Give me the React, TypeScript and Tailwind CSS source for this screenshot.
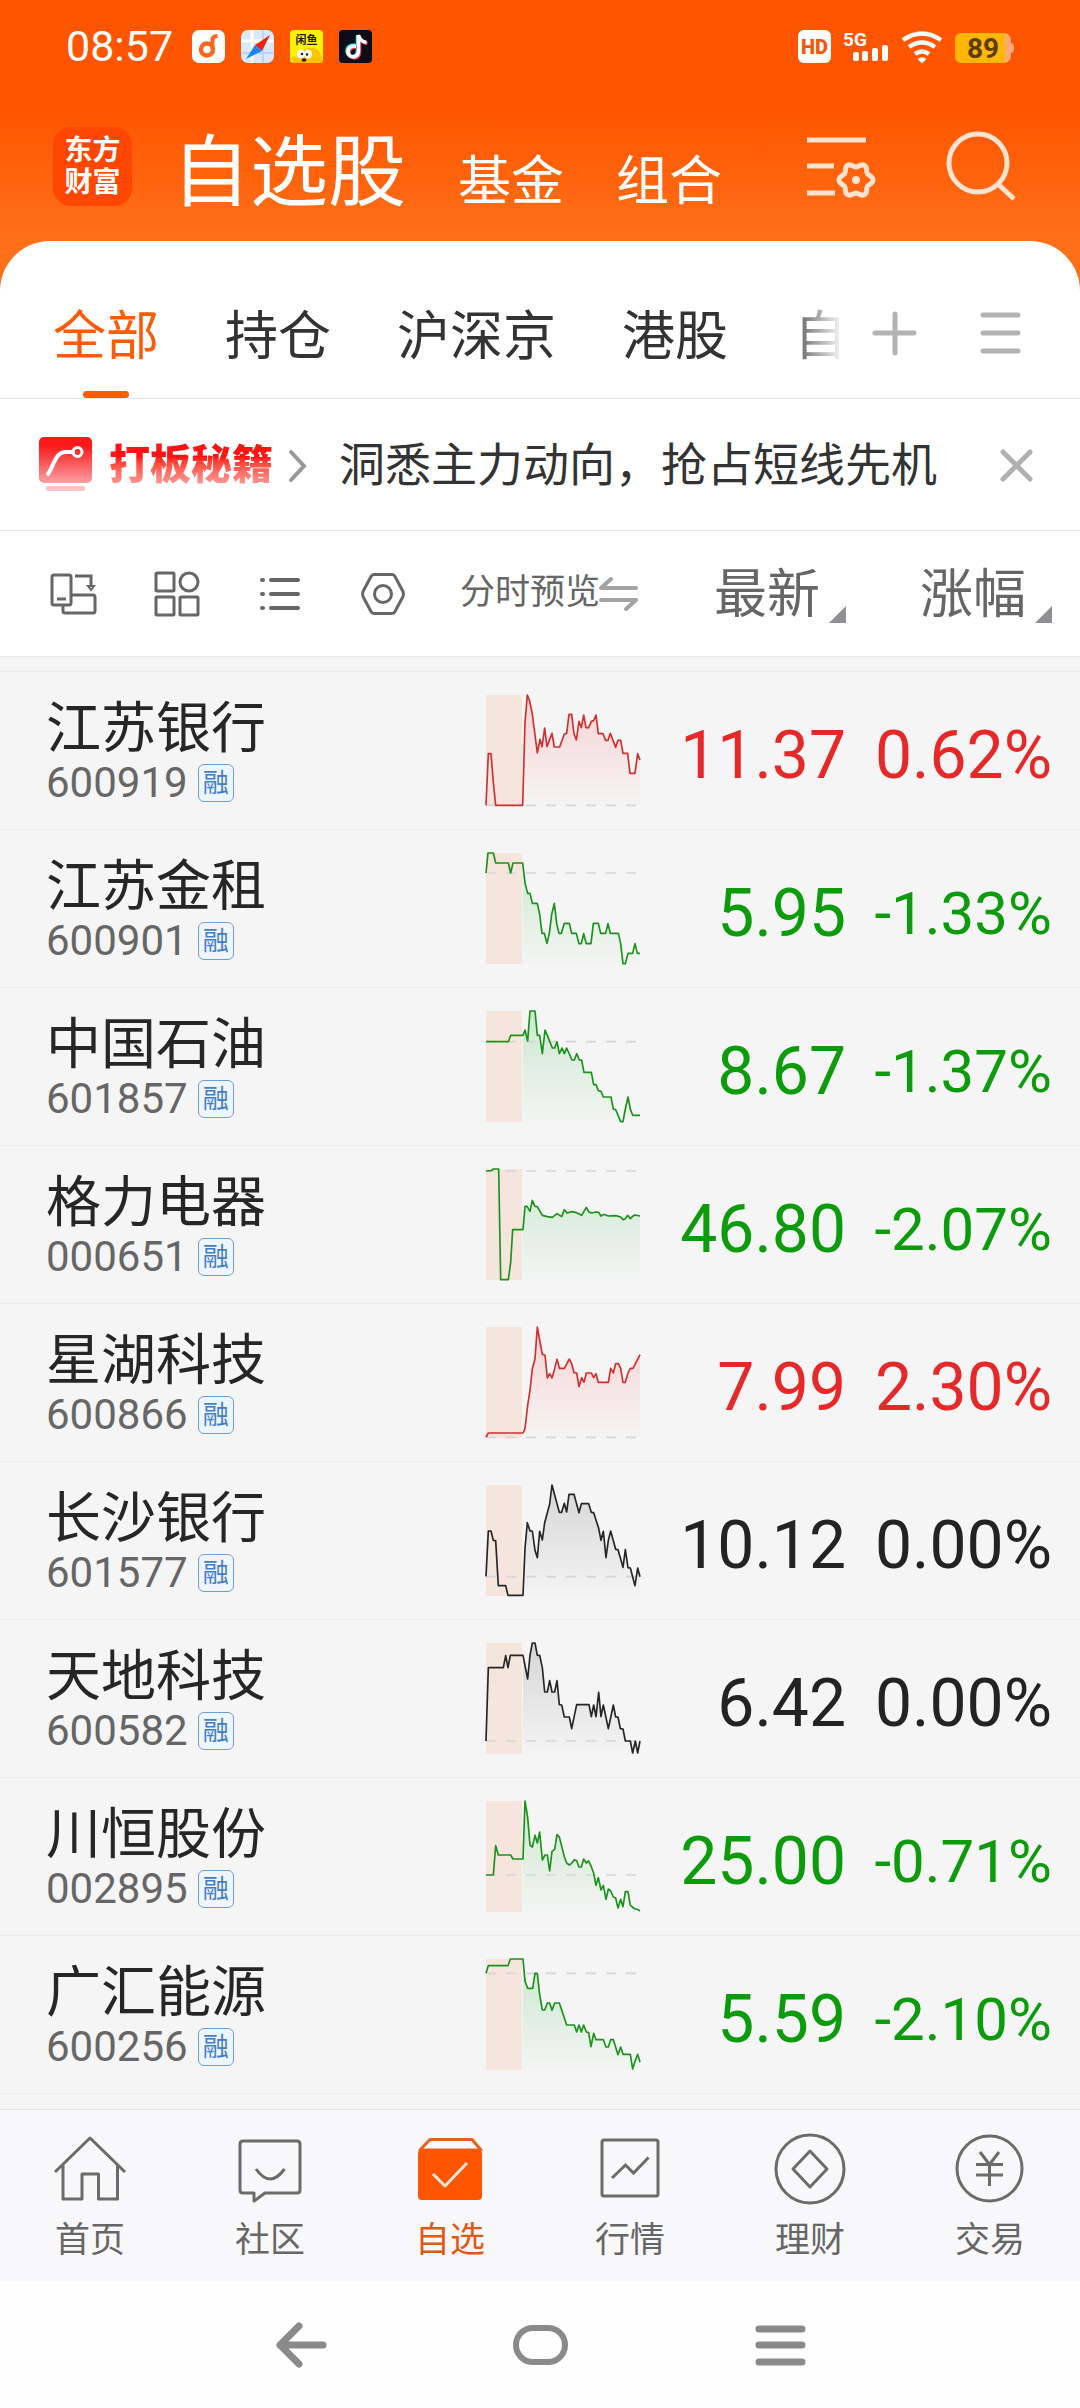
import React from "react";

type Tone = "up" | "down" | "flat";

type Stock = {
  name: string;
  code: string;
  price: string;
  change: string;
  tone: Tone;
  base: number;
  points: string;
};

const STROKE: Record<Tone, string> = { up: "#d2302f", down: "#1a931a", flat: "#262626" };
const FILL: Record<Tone, string> = { up: "#ff5a5a", down: "#3cb84a", flat: "#6b6b6b" };
const TEXT: Record<Tone, string> = {
  up: "text-[#e62828]",
  down: "text-[#0b9b0b]",
  flat: "text-[#232323]",
};

const STOCKS: Stock[] = [
  {
    name: "江苏银行", code: "600919", price: "11.37", change: "0.62%", tone: "up", base: 331,
    points:
      "0,331 7,176 15,176 22,263 29,331 110,331 117,83 124,0 131,18 139,58 154,174 162,133 168,155 176,99 183,155 198,115 205,156 221,156 235,117 242,115 249,58 257,58 264,117 271,135 279,79 286,98 293,60 300,98 308,98 316,79 323,77 330,60 337,116 351,116 359,136 366,136 373,115 389,157 396,136 404,136 411,175 425,175 432,235 447,235 455,176 462,195",
  },
  {
    name: "江苏金租", code: "600901", price: "5.95", change: "-1.33%", tone: "down", base: 60,
    points:
      "0,60 6,0 22,0 29,30 67,30 74,60 81,30 110,30 117,89 125,121 132,121 139,151 154,151 161,184 168,241 175,241 183,271 190,241 197,184 205,151 212,211 219,241 226,241 235,211 250,211 257,241 271,241 279,272 286,272 293,242 301,272 315,272 322,211 337,211 344,241 359,241 366,212 373,241 397,241 404,272 411,332 418,332 426,301 440,301 447,272 454,301 462,301",
  },
  {
    name: "中国石油", code: "601857", price: "8.67", change: "-1.37%", tone: "down", base: 92,
    points:
      "0,92 67,92 74,73 111,73 117,57 125,90 132,0 147,0 154,73 161,73 169,128 177,57 184,73 199,111 206,111 213,92 220,128 228,111 235,128 242,111 258,147 265,147 272,128 280,147 287,147 294,184 316,184 323,221 330,221 337,239 345,241 352,258 375,258 382,294 389,296 404,332 411,332 418,294 426,258 433,294 440,313 462,313",
  },
  {
    name: "格力电器", code: "000651", price: "46.80", change: "-2.07%", tone: "down", base: 6,
    points:
      "0,6 16,5 22,0 38,0 44,332 67,332 74,280 80,182 111,182 117,112 123,112 132,127 139,94 147,112 154,113 169,139 184,143 199,145 213,134 227,143 235,122 243,132 257,128 272,131 287,139 301,115 308,128 316,132 330,129 338,130 345,141 353,136 367,141 389,140 404,144 411,152 418,149 425,139 433,149 440,142 447,138 462,141",
  },
  {
    name: "星湖科技", code: "600866", price: "7.99", change: "2.30%", tone: "up", base: 331,
    points:
      "0,331 7,318 111,318 117,305 125,235 132,190 139,125 147,95 154,0 162,45 169,82 177,84 184,153 191,140 198,153 206,125 213,97 220,124 235,124 250,96 257,110 264,137 272,138 279,179 287,152 294,166 301,138 316,138 323,152 330,140 337,166 367,166 374,124 382,138 389,110 397,110 404,124 411,166 418,166 426,138 433,124 441,124 462,83",
  },
  {
    name: "长沙银行", code: "601577", price: "10.12", change: "0.00%", tone: "flat", base: 275,
    points:
      "0,274 7,138 15,138 22,166 29,167 37,302 59,302 66,331 111,331 117,190 124,113 132,138 139,138 147,196 154,218 161,139 169,165 176,113 191,57 198,0 206,30 220,82 227,82 235,55 242,81 249,28 264,28 279,83 286,56 308,56 316,82 323,83 338,130 345,166 352,139 360,218 367,166 374,138 389,193 396,194 411,247 418,194 426,248 433,249 447,302 455,249 462,275",
  },
  {
    name: "天地科技", code: "600582", price: "6.42", change: "0.00%", tone: "flat", base: 294,
    points:
      "0,294 7,74 52,74 59,38 66,74 73,37 111,37 125,108 132,37 139,0 147,0 154,37 161,37 169,74 176,147 184,147 191,113 198,147 206,147 213,113 220,185 227,186 235,222 250,222 257,257 272,185 309,185 316,221 323,186 330,221 338,148 345,221 352,186 367,257 382,186 389,222 396,222 403,257 411,258 418,294 433,294 440,330 448,294 455,330 462,294",
  },
  {
    name: "川恒股份", code: "002895", price: "25.00", change: "-0.71%", tone: "down", base: 222,
    points:
      "0,222 22,222 29,134 37,162 74,162 81,174 111,174 117,0 125,49 132,132 139,138 147,103 154,126 161,93 169,177 177,162 184,162 191,210 198,151 206,145 213,101 220,108 235,167 242,186 250,192 257,187 265,176 272,179 279,198 286,198 293,174 301,186 308,180 316,197 323,217 330,253 337,230 345,267 352,253 360,295 367,264 374,270 382,288 389,291 396,321 404,295 411,317 418,272 426,272 433,313 447,324 455,325 462,330",
  },
  {
    name: "广汇能源", code: "600256", price: "5.59", change: "-2.10%", tone: "down", base: 43,
    points:
      "0,43 7,20 66,20 73,0 111,0 117,66 125,88 140,88 147,43 154,43 161,108 169,153 176,153 184,132 191,132 198,154 206,132 220,132 242,198 265,198 272,219 279,198 286,219 293,198 301,219 308,221 315,263 323,223 330,242 352,242 360,264 367,264 374,242 382,242 396,287 404,264 411,286 433,286 440,330 447,307 455,286 462,310",
  },
];

function Sparkline({ stock }: { stock: Stock }) {
  const id = `area-${stock.code}`;
  const live = stock.points.split(" ").filter((p) => Number(p.split(",")[0]) >= 110);
  return (
    <svg viewBox="0 0 462 333" className="block h-[111px] w-[154px] overflow-visible" role="img" aria-label={`${stock.name}分时走势`}>
      <defs>
        <linearGradient id={id} x1="0" y1="0" x2="0" y2="333" gradientUnits="userSpaceOnUse">
          <stop offset="0" stopColor={FILL[stock.tone]} stopOpacity="0.22" />
          <stop offset="1" stopColor={FILL[stock.tone]} stopOpacity="0.01" />
        </linearGradient>
      </defs>
      <rect width="108" height="333" fill="#f5e5dd" />
      <polygon points={`111,333 ${live.join(" ")} 462,333`} fill={`url(#${id})`} />
      <line x1="0" x2="456" y1={stock.base} y2={stock.base} stroke="#d5d6dc" strokeWidth="5" strokeDasharray="30 30" />
      <polyline points={stock.points} fill="none" stroke={STROKE[stock.tone]} strokeWidth="5" strokeLinejoin="round" />
    </svg>
  );
}

const GEAR = Array.from({ length: 73 }, (_, i) => {
  const a = (i * Math.PI) / 36;
  const r = 15 + 2 * Math.cos(6 * a);
  return `${(856 + r * Math.cos(a)).toFixed(1)},${(180 + r * Math.sin(a)).toFixed(1)}`;
}).join(" ");

function StatusBar() {
  return (
    <div className="flex h-[92px] items-center justify-between pr-[65px] pl-[66px]">
      <div className="flex items-center gap-4">
        <span className="w-[110px] text-[43px] leading-none">08:57</span>
        <svg viewBox="0 0 33 33" className="size-[33px]" aria-hidden="true">
          <rect width="33" height="33" rx="7" fill="#fff" />
          <circle cx="15" cy="19.500" r="6" fill="none" stroke="#f9671c" strokeWidth="4.500" />
          <path d="M20.500 19V9.500q0-3 5-3.500" fill="none" stroke="#f9671c" strokeWidth="4" />
        </svg>
        <svg viewBox="0 0 33 33" className="size-[33px]" aria-hidden="true">
          <rect width="33" height="33" rx="7" fill="#dbe7fb" />
          <path d="M11 0v33M0 11h33" stroke="#fff" strokeWidth="3" />
          <path d="M22 0v33M0 23h33" stroke="#a9d3f5" strokeWidth="1.500" />
          <path d="M29 5 14 15l7 6z" fill="#e8230f" />
          <path d="m5 29 9-14 7 6z" fill="#1b86f3" />
        </svg>
        <svg viewBox="0 0 33 33" className="size-[33px]" aria-hidden="true">
          <rect width="33" height="33" rx="4" fill="#fff200" />
          <path d="M3 33q-3-6 1-7l3 2q1-10 9-9 7-3 12 1 4 5 4 13z" fill="#ffc400" />
          <ellipse cx="11" cy="24" rx="4" ry="4.500" fill="#fff" />
          <ellipse cx="18" cy="24" rx="4" ry="4.500" fill="#fff" />
          <circle cx="12" cy="24" r="1.300" fill="#222" />
          <circle cx="17" cy="24.500" r="1.300" fill="#222" />
          <ellipse cx="14" cy="30" rx="2.500" ry="1.800" fill="#3a1b00" />
          <text x="16.500" y="14" textAnchor="middle" fontSize="11" fontWeight="700" fill="#1d1d00">闲鱼</text>
        </svg>
        <svg viewBox="0 0 33 33" className="size-[33px]" aria-hidden="true">
          <rect width="33" height="33" rx="4" fill="#0b0d18" />
          <g fill="none" strokeWidth="3.500">
            <path d="M16 15q-8 0-8 6.500 1 5 5.500 5 5-.5 5-6V5q1 6 8 7.500" stroke="#35e5e2" />
            <path d="M18 17q-8 0-8 6 1 5 5.500 5 5-.5 5-6V6q1 6 8 7.500" stroke="#f5315c" />
            <path d="M17 16q-8 0-8 6 1 5 5.500 5 5-.5 5-6V5q1 6 8 7.500" stroke="#fff" />
          </g>
        </svg>
      </div>
      <svg viewBox="798 28 217 35" className="h-[35px] w-[217px]" role="img" aria-label="HD 5G 信号 无线网络 电量89">
        <rect x="798" y="29" width="33" height="33" rx="6" fill="#fff" />
        <text x="814.500" y="53" textAnchor="middle" fontSize="20" fontWeight="900" fill="#f05a10">HD</text>
        <text x="843" y="45" fontSize="19" fontWeight="700" fill="#fff">5G</text>
        <g fill="#fff">
          <rect x="853" y="51" width="6" height="9" rx="2" />
          <rect x="862" y="50" width="6" height="10" rx="2" />
          <rect x="872" y="47" width="6" height="13" rx="2" />
          <rect x="882" y="44" width="6" height="16" rx="2" />
        </g>
        <g fill="none" stroke="#fff" strokeWidth="4.500">
          <path d="M903 39q19-13 38 0" />
          <path d="M909 46q13-9 26 0" />
          <path d="M915 53q7-5 14 0" />
        </g>
        <path d="M917.500 58q4.500-3.500 9 0l-4.500 4.500z" fill="#fff" />
        <rect x="955" y="32" width="56" height="30" rx="7" fill="#ffa878" />
        <path d="M1011 42q3 0 3 5t-3 5z" fill="#ffa878" />
        <path d="M962 32h43v30h-43q-7 0-7-7V39q0-7 7-7z" fill="#ffb704" />
        <text x="983" y="57" textAnchor="middle" fontSize="28" fontWeight="700" fill="#5c3c00">89</text>
      </svg>
    </div>
  );
}

function AppHeader() {
  return (
    <header className="flex h-[149px] items-start justify-between pr-[64px] pl-[53px]">
      <div className="flex items-start">
        <div className="mt-[35px] flex h-[79px] w-[79px] flex-col items-center justify-center rounded-[18px] bg-[#ff4703] text-[28px] leading-8 font-bold">
          <span>东方</span>
          <span>财富</span>
        </div>
        <nav className="mt-[44px] ml-[40px] flex items-baseline gap-[52px] text-[53px] leading-[76px]">
          <a href="#stocks" className="text-[78px]">自选股</a>
          <a href="#funds">基金</a>
          <a href="#groups">组合</a>
        </nav>
      </div>
      <div className="mt-[38px] flex items-center gap-[64px]">
        <button aria-label="列表设置">
          <svg viewBox="804 130 74 74" className="block size-[74px]" fill="none" stroke="#ffe3d0" strokeWidth="5">
            <path d="M807 140h59M807 166h27M807 193h28" />
            <polygon points={GEAR} strokeLinejoin="round" />
            <circle cx="856" cy="180" r="4" fill="#ffe3d0" stroke="none" />
          </svg>
        </button>
        <button aria-label="搜索">
          <svg viewBox="942 130 74 74" className="block size-[74px]" fill="none" stroke="#ffe3d0" strokeWidth="5">
            <circle cx="978" cy="163" r="29" />
            <path d="m998 184 16 15" />
          </svg>
        </button>
      </div>
    </header>
  );
}

function Tabs() {
  return (
    <div className="flex h-[158px] items-stretch overflow-hidden rounded-t-[50px] border-b border-[#e4e4e4] bg-white">
      <div className="flex flex-1 gap-[66px] overflow-hidden pt-9 pl-[53px] text-[53px] whitespace-nowrap text-[#333] [mask-image:linear-gradient(to_right,black_calc(100%-70px),transparent_calc(100%-8px))]">
        <button className="relative shrink-0 text-[#fc5b09]">
          全部
          <span className="absolute bottom-0 left-1/2 h-[7px] w-[46px] -translate-x-1/2 rounded-full bg-[#fc5b09]" />
        </button>
        <button className="shrink-0">持仓</button>
        <button className="shrink-0">沪深京</button>
        <button className="shrink-0">港股</button>
        <button className="shrink-0">自</button>
      </div>
      <div className="flex shrink-0 items-center gap-[56px] pt-[26px] pr-[54px] pl-[18px]">
        <button aria-label="添加分组">
          <svg viewBox="0 0 50 50" className="block size-[50px]" stroke="#b3b3b3" strokeWidth="5" strokeLinecap="round">
            <path d="M25 6v39M5 25h39" />
          </svg>
        </button>
        <button aria-label="管理分组">
          <svg viewBox="0 0 50 50" className="block size-[50px]" stroke="#b3b3b3" strokeWidth="5" strokeLinecap="round">
            <path d="M7 7h35M7 25h35M7 43h35" />
          </svg>
        </button>
      </div>
    </div>
  );
}

function Promo() {
  return (
    <div className="flex h-[132px] items-center justify-between border-b border-[#e4e4e4] bg-white pr-[44px] pl-[39px]">
      <a href="#promo" className="flex items-center">
        <svg viewBox="39 437 54 55" className="h-[55px] w-[54px]" aria-hidden="true">
          <defs>
            <linearGradient id="promo" x1="0" y1="0" x2="0" y2="1">
              <stop offset="0.2" stopColor="#fb1a1b" />
              <stop offset="1" stopColor="#fba0a3" />
            </linearGradient>
          </defs>
          <rect x="39" y="437" width="53" height="46" rx="5" fill="url(#promo)" />
          <rect x="46" y="486" width="39" height="5" rx="2" fill="#f9c3c5" />
          <path d="M48 474c6-8 7-21 17-22h8" fill="none" stroke="#fff" strokeWidth="4" strokeLinecap="round" />
          <circle cx="77.500" cy="452" r="4.500" fill="none" stroke="#fff" strokeWidth="3" />
        </svg>
        <span className="ml-4 bg-linear-to-b from-[#ff1414] from-35% to-[#f9a5a5] to-95% bg-clip-text text-[41px] leading-[52px] font-black text-transparent">打板秘籍</span>
        <svg viewBox="286 448 22 38" className="ml-[13px] h-[38px] w-[22px]" fill="none" stroke="#999" strokeWidth="4" strokeLinecap="round" aria-hidden="true">
          <path d="m291 454 13 14-13 14" />
        </svg>
        <span className="ml-[31px] text-[46px] leading-[60px] text-[#333]">洞悉主力动向，抢占短线先机</span>
      </a>
      <button aria-label="关闭">
        <svg viewBox="0 0 38 38" className="block size-[38px]" stroke="#b0b0b0" strokeWidth="5" strokeLinecap="round">
          <path d="m5 6 27 27M32 6 5 33" />
        </svg>
      </button>
    </div>
  );
}

function SortMark() {
  return (
    <svg viewBox="0 0 17 17" className="mb-[-2px] ml-[9px] size-[17px]" aria-hidden="true">
      <path d="M17 0v17H0z" fill="#8e8e93" />
    </svg>
  );
}

const TOOL_ICON = "block size-12 fill-none stroke-[#666] stroke-3";

function StockTable() {
  return (
    <table className="w-full table-fixed border-separate border-spacing-0">
      <colgroup>
        <col />
        <col className="w-[188px]" />
        <col className="w-[201px]" />
        <col className="w-[231px]" />
      </colgroup>
      <thead className="bg-white text-[#666]">
        <tr className="h-[126px]">
          <th className="border-b border-[#e9e9e9] p-0 pl-[50px] font-normal">
            <div className="flex gap-[55px]">
              <button aria-label="横竖屏切换">
                <svg viewBox="51 569 48 48" className={TOOL_ICON}>
                  <rect x="53" y="574" width="19" height="30" rx="2" />
                  <path d="M58 598h9M73 594h21q2 0 2 2v14q0 2-2 2H66q-2 0-2-2v-5M76 575h16v11" />
                  <path d="M89 585h6l-3 4z" strokeWidth="2" />
                </svg>
              </button>
              <button aria-label="宫格">
                <svg viewBox="153 569 48 48" className={TOOL_ICON}>
                  <rect x="156" y="572" width="18" height="18" rx="1" />
                  <circle cx="189" cy="581" r="9" />
                  <rect x="156" y="596" width="18" height="18" rx="1" />
                  <rect x="180" y="596" width="18" height="18" rx="1" />
                </svg>
              </button>
              <button aria-label="列表">
                <svg viewBox="256 569 48 48" className="block size-12 fill-none stroke-[#666] stroke-4" strokeLinecap="round">
                  <path d="M271 579h27M271 593h27M271 607h27M262 579h1M262 593h1M262 607h1" />
                </svg>
              </button>
              <button aria-label="设置">
                <svg viewBox="359 569 48 48" className={TOOL_ICON} strokeLinejoin="round">
                  <path d="M374 573.500h18q2 0 3 2l8 15q1 2.500 0 5l-8 15q-1 2-3 2h-18q-2 0-3-2l-8-15q-1-2.500 0-5l8-15q1-2 3-2z" />
                  <circle cx="383" cy="593" r="8.500" />
                </svg>
              </button>
            </div>
          </th>
          <th className="border-b border-[#e9e9e9] p-0 font-normal">
            <button className="flex items-center text-[35px] whitespace-nowrap">
              分时预览
              <svg viewBox="598 571 42 42" className="-ml-[2px] size-[42px]" fill="none" stroke="#a3a3a3" strokeWidth="4" strokeLinecap="round" strokeLinejoin="round" aria-hidden="true">
                <path d="M611 577l-10 9h35M601 598h35l-10 9" />
              </svg>
            </button>
          </th>
          <th className="border-b border-[#e9e9e9] p-0 pt-[2px] pr-[3px] font-normal">
            <button className="ml-auto flex items-end text-[53px] leading-[52px]">
              最新
              <SortMark />
            </button>
          </th>
          <th className="border-b border-[#e9e9e9] p-0 pt-[2px] pr-[28px] font-normal">
            <button className="ml-auto flex items-end text-[53px] leading-[52px]">
              涨幅
              <SortMark />
            </button>
          </th>
        </tr>
      </thead>
      <tbody>
        <tr className="h-[14px]" aria-hidden="true">
          <td colSpan={4} className="p-0" />
        </tr>
        {STOCKS.map((s) => (
          <tr key={s.code} className="h-[158px]">
            <td className="border-t border-[#ebebeb] p-0 pt-[5px] pl-[46px]">
              <div className="text-[55px] leading-[60px] text-[#262626]">{s.name}</div>
              <div className="flex items-center gap-[10px] text-[42px] leading-[50px] text-[#666]">
                {s.code}
                <span className="flex h-[38px] w-[36px] items-center justify-center rounded-md border border-[#6c9fd8] bg-[#eef5fc] text-[26px] leading-none text-[#3f7fca]">融</span>
              </div>
            </td>
            <td className="border-t border-[#ebebeb] p-0 pl-[26px]">
              <Sparkline stock={s} />
            </td>
            <td className={`border-t border-[#ebebeb] p-0 pt-[11px] pr-[3px] text-right text-[66px] leading-none ${TEXT[s.tone]}`}>{s.price}</td>
            <td className={`border-t border-[#ebebeb] p-0 pt-[11px] pr-[28px] text-right leading-none ${s.change.startsWith("-") ? "text-[60px]" : "text-[66px]"} ${TEXT[s.tone]}`}>{s.change}</td>
          </tr>
        ))}
      </tbody>
    </table>
  );
}

const NAV_ICON = "block size-20 fill-none stroke-[#6b6b6b] stroke-3";

function NavItem({ label, active, children }: { label: string; active?: boolean; children: React.ReactNode }) {
  return (
    <a href={`#${label}`} className={`flex flex-1 flex-col items-center pt-[20px] text-[35px] leading-[44px] ${active ? "text-[#e05a14]" : "text-[#666]"}`}>
      {children}
      <span className="mt-[9px]">{label}</span>
    </a>
  );
}

function BottomNav() {
  return (
    <nav className="flex h-[173px] border-t border-[#e2e2e2] bg-[#f8f8fa]">
      <NavItem label="首页">
        <svg viewBox="50 2130 80 80" className={NAV_ICON} strokeLinejoin="round">
          <path d="m55 2172 35-34 35 34M63 2165v34h19v-25h16.500v25h19v-34" />
        </svg>
      </NavItem>
      <NavItem label="社区">
        <svg viewBox="230 2130 80 80" className={NAV_ICON} strokeLinejoin="round">
          <path d="M243 2141h54q3 0 3 3v46q0 3-3 3h-32l-11 8v-8h-11q-3 0-3-3v-46q0-3 3-3zM256 2169q14 20 28.500 0" />
        </svg>
      </NavItem>
      <NavItem label="自选" active>
        <svg viewBox="410 2130 80 80" className="block size-20" fill="none" strokeLinejoin="round">
          <path d="m420 2150 10-10.500h42l9 10.500z" stroke="#ea5f1a" strokeWidth="3" />
          <rect x="418" y="2150" width="64" height="50" rx="4" fill="#ff5500" />
          <path d="m433 2174 12 12 22-23" stroke="#ffe6d6" strokeWidth="3" />
        </svg>
      </NavItem>
      <NavItem label="行情">
        <svg viewBox="590 2130 80 80" className={NAV_ICON}>
          <rect x="602" y="2140" width="56" height="56" rx="2" />
          <path d="m612 2178 13.500-13 8 8 15-15.500" />
        </svg>
      </NavItem>
      <NavItem label="理财">
        <svg viewBox="770 2130 80 80" className={NAV_ICON} strokeLinejoin="round">
          <circle cx="810" cy="2169" r="34" />
          <path d="m810 2151 17 18-17 18-17-18z" />
        </svg>
      </NavItem>
      <NavItem label="交易">
        <svg viewBox="950 2130 80 80" className={NAV_ICON}>
          <circle cx="989.500" cy="2168.500" r="32.500" />
          <path d="m980 2152 9.500 12.500 9.500-12.500M976 2164.500h27M976 2175h27M989.500 2164v22" />
        </svg>
      </NavItem>
    </nav>
  );
}

function SystemNav() {
  return (
    <div className="flex h-[126px] items-center justify-center gap-[178px] bg-[#fefefe]">
      <button aria-label="返回">
        <svg viewBox="0 0 62 62" className="block size-[62px]" fill="none" stroke="#8a8a8a" strokeWidth="7" strokeLinecap="round" strokeLinejoin="round">
          <path d="M30 12 11 31l19 19M11 31h43" />
        </svg>
      </button>
      <button aria-label="主屏幕">
        <svg viewBox="0 0 62 62" className="block size-[62px]" fill="none" stroke="#8a8a8a" strokeWidth="6">
          <rect x="7" y="14" width="49" height="34" rx="17" />
        </svg>
      </button>
      <button aria-label="最近任务">
        <svg viewBox="0 0 62 62" className="block size-[62px]" stroke="#8a8a8a" strokeWidth="7" strokeLinecap="round">
          <path d="M10 15h43M10 31h43M10 48h43" />
        </svg>
      </button>
    </div>
  );
}

export default function App() {
  return (
    <div className="flex min-h-screen flex-col bg-[#f5f5f5] font-[Roboto,'Noto_Sans_CJK_SC',sans-serif]">
      <div className="bg-[linear-gradient(to_bottom,#ff5500_110px,#ff7018_240px)] text-white">
        <StatusBar />
        <AppHeader />
        <Tabs />
      </div>
      <Promo />
      <main className="flex-1">
        <StockTable />
        <div className="border-t border-[#ebebeb]" />
      </main>
      <BottomNav />
      <SystemNav />
    </div>
  );
}
